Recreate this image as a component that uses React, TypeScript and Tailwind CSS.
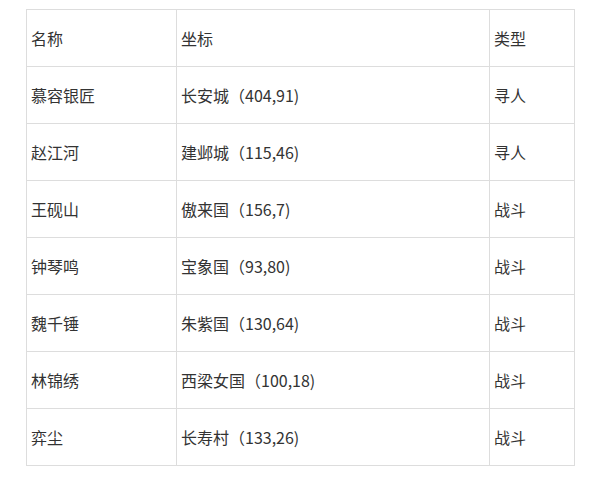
const rows: [string, string, string][] = [
  ["慕容银匠", "长安城（404,91)", "寻人"],
  ["赵江河", "建邺城（115,46)", "寻人"],
  ["王砚山", "傲来国（156,7)", "战斗"],
  ["钟琴鸣", "宝象国（93,80)", "战斗"],
  ["魏千锤", "朱紫国（130,64)", "战斗"],
  ["林锦绣", "西梁女国（100,18)", "战斗"],
  ["弈尘", "长寿村（133,26)", "战斗"],
];

const cell = "border border-[#dddddd] h-[57px] px-[4px] align-middle text-left font-normal";

export default function App() {
  return (
    <div
      className="min-h-[484px] bg-white pt-[9px] pl-[26px] text-[16px] text-[#333333]"
      style={{ fontFamily: '"Microsoft YaHei", "Noto Sans CJK SC", sans-serif' }}
    >
      <table className="w-[548px] table-fixed border-collapse">
        <colgroup>
          <col className="w-[150px]" />
          <col className="w-[313px]" />
          <col className="w-[85px]" />
        </colgroup>
        <thead>
          <tr>
            <th className={cell}>名称</th>
            <th className={cell}>坐标</th>
            <th className={cell}>类型</th>
          </tr>
        </thead>
        <tbody>
          {rows.map(([name, place, kind]) => (
            <tr key={name}>
              <td className={cell}>{name}</td>
              <td className={cell}>{place}</td>
              <td className={cell}>{kind}</td>
            </tr>
          ))}
        </tbody>
      </table>
    </div>
  );
}
